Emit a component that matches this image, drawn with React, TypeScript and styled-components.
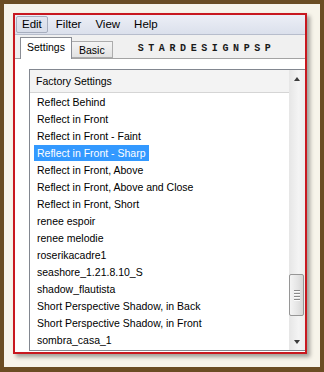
import styled, { createGlobalStyle } from "styled-components";

const GlobalStyle = createGlobalStyle`
  html, body {
    margin: 0;
    padding: 0;
    background: #6b4d23;
  }
  body {
    font-family: "Liberation Sans", Arial, sans-serif;
  }
`;

const Frame = styled.div`
  width: 324px;
  height: 372px;
  box-sizing: border-box;
  padding: 4px 4px 5px 4px;
  background: #6b4d23;
  display: flex;
`;

const Mat = styled.div`
  flex: 1;
  background: #f7f4ea;
  padding: 9px 0 0 9px;
  display: flex;
  align-items: flex-start;
`;

const Window = styled.div`
  width: 290px;
  height: 337px;
  border: 2px solid #c8181f;
  box-shadow: 3px 3px 4px rgba(0, 0, 0, 0.35);
  background: #ffffff;
  display: flex;
  flex-direction: column;
  overflow: hidden;
`;

const MenuBar = styled.div`
  height: 18px;
  border-bottom: 1px solid #b7bdcc;
  background: linear-gradient(#eceff6, #dbe0ec);
  display: flex;
  align-items: flex-start;
  gap: 2px;
  padding: 1px 0 0 1px;
  box-sizing: content-box;
`;

const MenuItem = styled.div<{ $pressed?: boolean }>`
  height: 15px;
  line-height: 15px;
  padding: 0 5px;
  font-size: 11.5px;
  color: #000;
  border: 1px solid ${p => (p.$pressed ? "#a7aebe" : "transparent")};
  border-radius: 2px;
  background: ${p => (p.$pressed ? "linear-gradient(#e3e7f0, #d8dde9)" : "transparent")};
`;

const TabStrip = styled.div`
  height: 23px;
  background: #f0f0f0;
  border-bottom: 1px solid #a3a3a3;
  display: flex;
  align-items: flex-end;
  padding-left: 5px;
`;

const Tab = styled.div<{ $active?: boolean }>`
  font-size: 10.5px;
  color: #000;
  box-sizing: border-box;
  height: ${p => (p.$active ? "22px" : "17px")};
  line-height: ${p => (p.$active ? "19px" : "16px")};
  padding: 0 ${p => (p.$active ? "6px" : "7px")};
  margin-bottom: ${p => (p.$active ? "-1px" : "0")};
  margin-left: ${p => (p.$active ? "0" : "-1px")};
  border: 1px solid ${p => (p.$active ? "#8a8d94" : "#acacac")};
  border-bottom: ${p => (p.$active ? "none" : "1px solid #acacac")};
  background: ${p => (p.$active ? "#ffffff" : "linear-gradient(#f4f4f4, #e2e2e2)")};
  position: relative;
  z-index: ${p => (p.$active ? 1 : 0)};
`;

const Signature = styled.div`
  margin: 0 0 4px 25px;
  font-family: "Liberation Mono", "DejaVu Sans Mono", monospace;
  font-weight: bold;
  font-size: 10px;
  letter-spacing: 4.6px;
  color: #1a1a1a;
`;

const Panel = styled.div`
  flex: 1;
  background: #ffffff;
  padding: 10px 0 1px 14px;
  display: flex;
  min-height: 0;
`;

const ListBox = styled.div`
  flex: 1;
  display: flex;
  border-top: 1px solid #828790;
  border-left: 1px solid #828790;
  border-bottom: 1px solid #828790;
  min-height: 0;
`;

const ListBody = styled.div`
  flex: 1;
  display: flex;
  flex-direction: column;
  overflow: hidden;
`;

const Header = styled.div`
  height: 22px;
  line-height: 22px;
  border-bottom: 1px solid #d5d5d5;
  background: #f3f3f3;
  padding-left: 6px;
  font-size: 10.5px;
  color: #000;
`;

const Items = styled.div`
  padding-top: 1px;
`;

const Item = styled.div`
  height: 17px;
  padding-left: 4px;
  display: flex;
  align-items: flex-start;
`;

const ItemLabel = styled.span<{ $selected?: boolean }>`
  height: 16px;
  line-height: 16px;
  padding: 0 3px;
  font-size: 10.5px;
  white-space: nowrap;
  color: ${p => (p.$selected ? "#ffffff" : "#000000")};
  background: ${p => (p.$selected ? "#3399ff" : "transparent")};
`;

const ScrollBar = styled.div`
  width: 16px;
  display: flex;
  flex-direction: column;
  background: linear-gradient(to right, #e6e6e6, #f4f4f4 60%, #ececec);
`;

const ArrowButton = styled.div`
  height: 17px;
  display: flex;
  align-items: center;
  justify-content: center;
`;

const Arrow = styled.div<{ $down?: boolean }>`
  width: 0;
  height: 0;
  border-left: 3.5px solid transparent;
  border-right: 3.5px solid transparent;
  border-bottom: ${p => (p.$down ? "0" : "4px solid #3c3c3c")};
  border-top: ${p => (p.$down ? "4px solid #3c3c3c" : "0")};
`;

const Track = styled.div`
  flex: 1;
  display: flex;
  flex-direction: column;
`;

const Thumb = styled.div`
  margin-top: 187px;
  width: 13px;
  height: 40px;
  border: 1px solid #969696;
  border-radius: 2px;
  background: linear-gradient(to right, #f4f4f4, #e4e4e4 60%, #d6d6d6);
  display: flex;
  flex-direction: column;
  align-items: center;
  justify-content: center;
  gap: 1px;
`;

const Grip = styled.div`
  width: 6px;
  height: 1px;
  background: #8a8a8a;
  border-bottom: 1px solid #fbfbfb;
`;

const presets = [
  "Reflect Behind",
  "Reflect in Front",
  "Reflect in Front - Faint",
  "Reflect in Front - Sharp",
  "Reflect in Front, Above",
  "Reflect in Front, Above and Close",
  "Reflect in Front, Short",
  "renee espoir",
  "renee melodie",
  "roserikacadre1",
  "seashore_1.21.8.10_S",
  "shadow_flautista",
  "Short Perspective Shadow, in Back",
  "Short Perspective Shadow, in Front",
  "sombra_casa_1"
];

export default function App() {
  const selected = "Reflect in Front - Sharp";

  return (
    <>
      <GlobalStyle />
      <Frame>
        <Mat>
          <Window>
            <MenuBar>
              <MenuItem $pressed>Edit</MenuItem>
              <MenuItem>Filter</MenuItem>
              <MenuItem>View</MenuItem>
              <MenuItem>Help</MenuItem>
            </MenuBar>
            <TabStrip>
              <Tab $active>Settings</Tab>
              <Tab>Basic</Tab>
              <Signature>STARDESIGNPSP</Signature>
            </TabStrip>
            <Panel>
              <ListBox>
                <ListBody>
                  <Header>Factory Settings</Header>
                  <Items>
                    {presets.map(name => (
                      <Item key={name}>
                        <ItemLabel $selected={name === selected}>{name}</ItemLabel>
                      </Item>
                    ))}
                  </Items>
                </ListBody>
                <ScrollBar>
                  <ArrowButton>
                    <Arrow />
                  </ArrowButton>
                  <Track>
                    <Thumb>
                      <Grip />
                      <Grip />
                      <Grip />
                      <Grip />
                    </Thumb>
                  </Track>
                  <ArrowButton>
                    <Arrow $down />
                  </ArrowButton>
                </ScrollBar>
              </ListBox>
            </Panel>
          </Window>
        </Mat>
      </Frame>
    </>
  );
}
